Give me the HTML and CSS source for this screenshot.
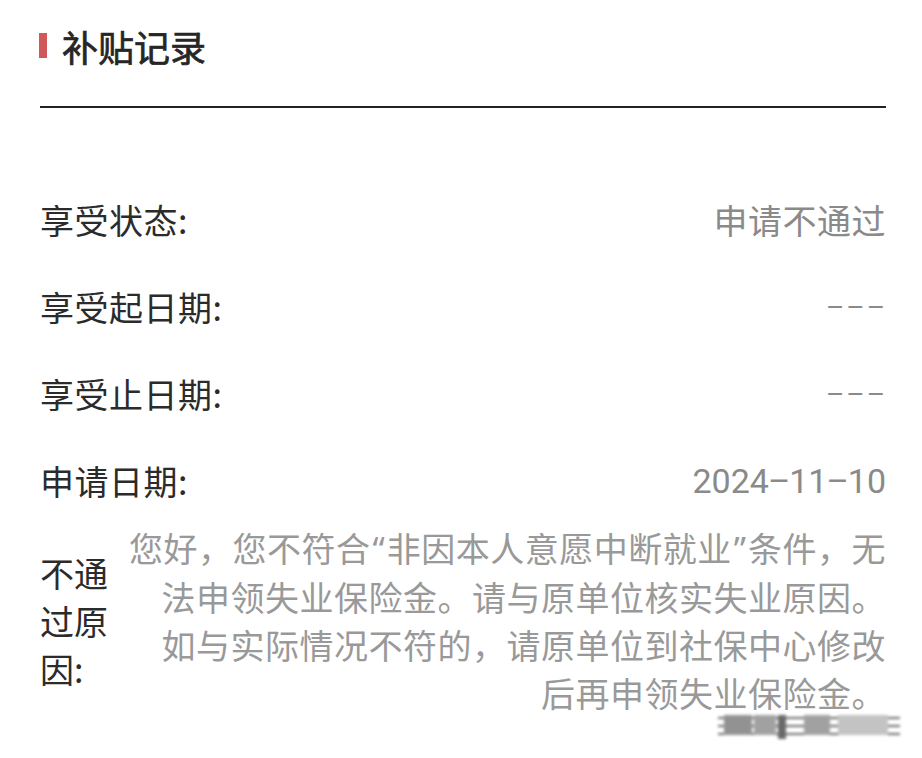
FILE: index.html
```html
<!DOCTYPE html>
<html lang="zh-CN">
<head>
<meta charset="utf-8">
<title>补贴记录</title>
<link rel="stylesheet" href="styles.css">
</head>
<body>
<div class="page">
  <div class="header">
    <span class="mark"></span>
    <h1 class="title">补贴记录</h1>
  </div>
  <div class="list">
    <div class="row">
      <span class="label">享受状态:</span>
      <span class="value">申请不通过</span>
    </div>
    <div class="row">
      <span class="label">享受起日期:</span>
      <span class="value num dashes">–––</span>
    </div>
    <div class="row">
      <span class="label">享受止日期:</span>
      <span class="value num dashes">–––</span>
    </div>
    <div class="row">
      <span class="label">申请日期:</span>
      <span class="value num">2024<span class="dash">–</span>11<span class="dash">–</span>10</span>
    </div>
    <div class="reason">
      <div class="reason-label">不通过原因:</div>
      <div class="reason-text">
        <span class="line">您好，您不符合<span class="q">“</span>非因本人意愿中断就业<span class="q">”</span>条件，无</span>
        <span class="line">法申领失业保险金。请与原单位核实失业原因。</span>
        <span class="line">如与实际情况不符的，请原单位到社保中心修改</span>
        <span class="line">后再申领失业保险金。</span>
      </div>
    </div>
  </div>
  <div class="watermark" aria-hidden="true">
    <span class="wm-bar"></span><span class="wm-bar"></span><span class="wm-bar"></span>
    <span class="wm-block b1"></span><span class="wm-block b2"></span><span class="wm-block b3"></span><span class="wm-block b4"></span><span class="wm-block b5"></span>
  </div>
</div>
</body>
</html>
```

FILE: styles.css
```css
html, body {
  margin: 0;
  padding: 0;
  background: #ffffff;
}
body {
  font-family: "Noto Sans CJK SC", "Noto Sans", sans-serif;
  color: #333333;
}
.page {
  position: relative;
  width: 922px;
  height: 758px;
  box-sizing: border-box;
  padding: 0 36px 0 40px;
  overflow: hidden;
}
.header {
  height: 108px;
  box-sizing: border-box;
  padding-top: 28px;
  border-bottom: 2px solid #222222;
  display: flex;
  align-items: flex-start;
}
.mark {
  display: block;
  width: 8px;
  height: 25px;
  margin-top: 5px;
  margin-right: 15px;
  margin-left: -1px;
  background: #d0585a;
}
.title {
  margin: 0;
  font-size: 36px;
  line-height: 36px;
  font-weight: 400;
  -webkit-text-stroke: 0.7px #262626;
  color: #262626;
}
.list {
  margin-top: 68px;
}
.row {
  height: 87px;
  display: flex;
  align-items: center;
  justify-content: space-between;
  font-size: 34px;
  letter-spacing: 0.5px;
}
.label {
  color: #2b2b2b;
}
.value {
  color: #8a8a8a;
}
.num {
  font-family: Roboto, "Noto Sans CJK SC", sans-serif;
  letter-spacing: 0;
}
.dashes {
  font-size: 28px;
  letter-spacing: 2px;
  margin-right: -1px;
  position: relative;
  top: 1px;
}
.dash {
  margin: 0 -1px;
}
.reason {
  display: flex;
  align-items: center;
}
.reason-label {
  width: 72px;
  font-size: 34px;
  line-height: 48px;
  color: #2b2b2b;
  flex: none;
}
.reason-text {
  flex: 1;
  min-width: 0;
  text-align: right;
  font-size: 34px;
  line-height: 48px;
  letter-spacing: 0.5px;
  color: #999999;
}
.line {
  display: block;
  white-space: nowrap;
}
.q {
  font-family: "Noto Sans", sans-serif;
  letter-spacing: 0;
  margin: 0 2px;
}
.watermark {
  position: absolute;
  left: 718px;
  top: 713px;
  width: 184px;
  height: 26px;
  filter: blur(1.4px);
  opacity: 0.8;
}
.wm-bar {
  position: absolute;
  left: 0;
  width: 182px;
  height: 2px;
  background: #444444;
}
.wm-bar:nth-child(1) { top: 4px; }
.wm-bar:nth-child(2) { top: 12px; }
.wm-bar:nth-child(3) { top: 20px; }
.wm-block {
  position: absolute;
  top: 2px;
  height: 20px;
  background: #8a8a8a;
}
.b1 { left: 6px; width: 28px; background: #777777; }
.b2 { left: 36px; width: 22px; }
.b3 { left: 60px; width: 8px; height: 24px; background: #444444; }
.b4 { left: 86px; width: 26px; }
.b5 { left: 120px; width: 50px; background: #b5b5b5; }
```
